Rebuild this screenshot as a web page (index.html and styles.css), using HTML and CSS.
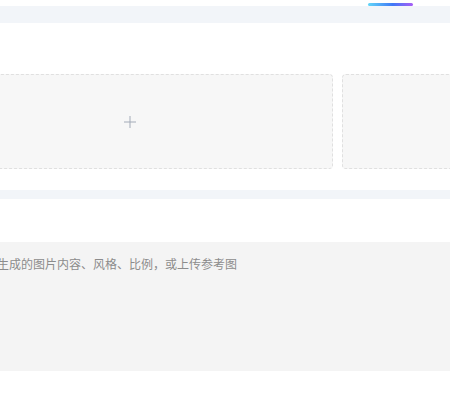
FILE: index.html
```html
<!DOCTYPE html>
<html lang="zh-CN">
<head>
    <meta charset="UTF-8">
    <meta name="viewport" content="width=device-width, initial-scale=1.0">
    <title>图片生成</title>
    <link rel="stylesheet" href="styles.css">
</head>
<body>
    <div class="tabs">
        <div class="tab-indicator"></div>
    </div>
    <div class="divider"></div>

    <div class="page">
        <!-- 参考图上传 -->
        <div class="upload-row">
            <div class="upload-box">
                <svg class="plus" width="12" height="12" viewBox="0 0 12 12">
                    <path d="M6 0V12M0 6H12" stroke="#a3abb8" stroke-width="1" fill="none"/>
                </svg>
            </div>
            <div class="upload-box"></div>
        </div>
    </div>

    <div class="divider thin"></div>

    <div class="page prompt-section">
        <div class="prompt-input">
            <span class="placeholder">请描述你想生成的图片内容、风格、比例，或上传参考图</span>
        </div>
    </div>
</body>
</html>
```

FILE: styles.css
```css
body {
    margin: 0;
    overflow: hidden;
    background-color: #fff;
    font-family: "Noto Sans CJK SC", "Noto Sans", sans-serif;
    color: #333;
}
.tabs {
    height: 6px;
    padding-top: 3px;
    box-sizing: border-box;
}
.tab-indicator {
    width: 45px;
    height: 3px;
    margin-left: 368px;
    border-radius: 2px;
    background: linear-gradient(90deg, #62d6f8, #3f78f6 55%, #a95ef6);
}
.divider {
    height: 17px;
    background-color: #f2f5f9;
}
.divider.thin {
    height: 9px;
    margin-top: 21px;
}
.page {
    margin-left: -73px;
    width: 900px;
}
.upload-row {
    display: flex;
    gap: 9px;
    padding-top: 51px;
}
.upload-box {
    width: 406px;
    height: 95px;
    box-sizing: border-box;
    border: 1px dashed #e0e0e0;
    border-radius: 4px;
    background-color: #f7f7f7;
    display: flex;
    align-items: center;
    justify-content: center;
}
.prompt-section {
    padding-top: 43px;
}
.prompt-input {
    height: 129px;
    box-sizing: border-box;
    padding: 12px 10px;
    background-color: #f4f4f4;
    font-size: 12px;
    line-height: 20px;
}
.placeholder {
    color: #8c8c8c;
}
```
